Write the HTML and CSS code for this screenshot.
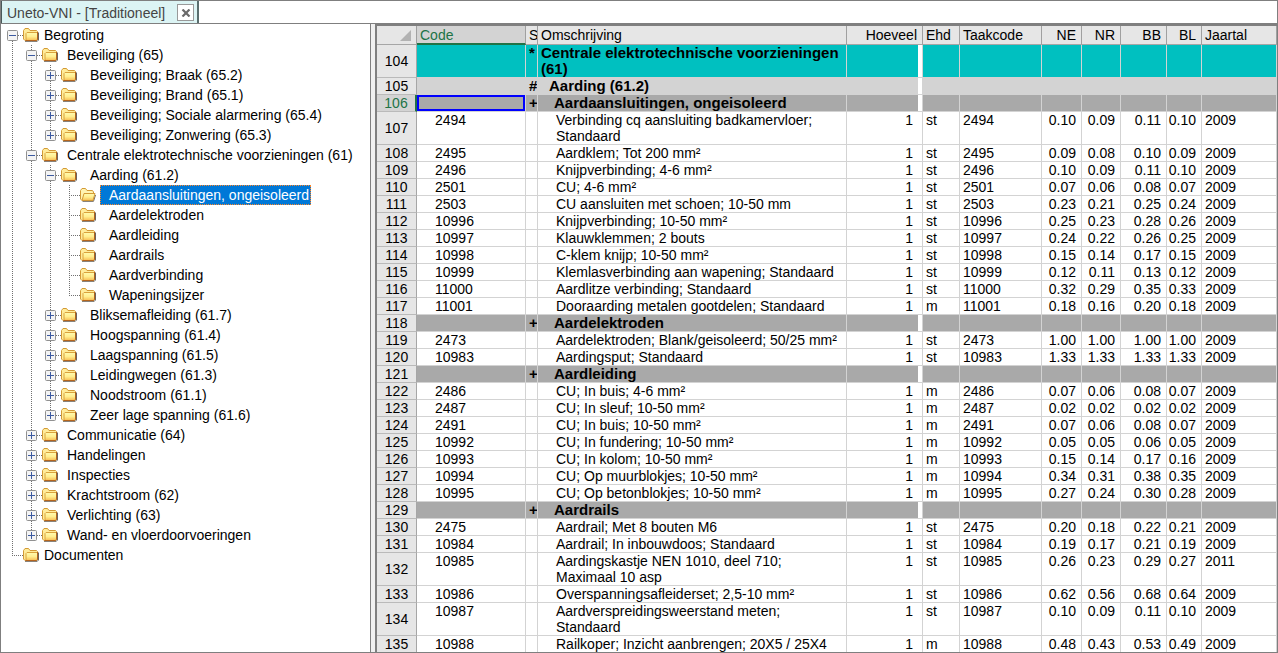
FILE: index.html
```html
<!DOCTYPE html>
<html lang="nl">
<head>
<meta charset="utf-8">
<title>Uneto-VNI - [Traditioneel]</title>
<link rel="stylesheet" href="styles.css">
</head>
<body>
<svg class="defs" width="0" height="0" aria-hidden="true">
  <linearGradient id="gold" x1="0" y1="0" x2="0" y2="1"><stop offset="0" stop-color="#fffbb0"/><stop offset=".5" stop-color="#ffee90"/><stop offset="1" stop-color="#f7bd52"/></linearGradient>
</svg>
<div class="window">
  <header class="tabbar">
    <div class="tab">
      <span class="tab-title">Uneto-VNI - [Traditioneel]</span>
      <button class="tab-close" type="button" aria-label="Sluiten">
        <svg viewBox="0 0 10 8" width="10" height="8"><path d="M1.500 0.500L8.500 7.500M8.500 0.500L1.500 7.500" stroke="#6a6a6a" stroke-width="2.200" fill="none"/></svg>
      </button>
    </div>
  </header>
  <main class="panes">
    <nav class="tree-pane" aria-label="Begroting"><ul class="tree" id="tree"></ul></nav>
    <section class="grid-pane">
      <table class="grid">
        <colgroup>
          <col class="w-row"><col class="w-code"><col class="w-s"><col class="w-oms"><col class="w-hoev"><col class="w-ehd"><col class="w-taak"><col class="w-ne"><col class="w-nr"><col class="w-bb"><col class="w-bl"><col class="w-jaar">
        </colgroup>
        <thead>
          <tr>
            <th class="corner"><svg viewBox="0 0 11 11" width="11" height="11"><path d="M11 0V11H0Z" fill="#b2b2b2"/></svg></th>
            <th class="active">Code</th><th class="s">S</th><th>Omschrijving</th><th class="num">Hoeveel</th><th>Ehd</th><th>Taakcode</th><th class="num">NE</th><th class="num">NR</th><th class="num">BB</th><th class="num">BL</th><th>Jaartal</th>
          </tr>
        </thead>
        <tbody id="rows"></tbody>
      </table>
    </section>
  </main>
</div>
<script src="app.js"></script>
</body>
</html>
```
FILE: styles.css
```css
* { box-sizing: border-box; }
body {
  margin: 0;
  font-family: "Liberation Sans", Arial, sans-serif;
  font-size: 14px;
  line-height: 16px;
  color: #000;
  background: #fff;
}
.defs { display: none; }
.defs { display: block; position: absolute; }
.window {
  display: flex;
  flex-direction: column;
  height: 100vh;
  border: 1px solid #7f7f7f;
  overflow: hidden;
}
.tabbar { display: flex; height: 23px; border-bottom: 1px solid #7f7f7f; flex: none; }
.tab {
  display: flex;
  align-items: center;
  gap: 12px;
  padding: 1px 3px 0 5px;
  background: #dcf4f4;
  border-left: 1px solid #4a5a5a;
  border-right: 2px solid #5a6e6e;
  color: #444;
}
.tab-title { white-space: nowrap; }
.tab-close {
  display: flex;
  align-items: center;
  justify-content: center;
  width: 17px;
  height: 17px;
  padding: 0;
  border: 1px solid #999;
  background: #fff;
}
.panes { display: flex; flex: 1; min-height: 0; background: #f0f0f0; }
.tree-pane {
  flex: none;
  width: 370px;
  background: #fff;
  border-right: 1px solid #7f7f7f;
  overflow: hidden;
}
.grid-pane {
  flex: 1;
  min-width: 0;
  margin-left: 4px;
  border-top: 2px solid #7f7f7f;
  border-left: 2px solid #7f7f7f;
  background: #fff;
  overflow: hidden;
}

.tree, .tree ul { list-style: none; margin: 0; padding: 0; }
.tree { padding: 1px 0 0 6px; }
.tree ul { margin-left: 19px; }
.node { position: relative; }
.node::before {
  content: "";
  position: absolute;
  left: 5px;
  top: 0;
  bottom: 0;
  width: 1px;
  background: repeating-linear-gradient(to bottom, #707070 0 1px, transparent 1px 2px);
}
.node:last-child::before { bottom: auto; height: 11px; }
.tree > .node:first-child::before { top: 10px; }
.line { position: relative; display: flex; align-items: center; height: 20px; }
.stub {
  flex: none;
  display: flex;
  align-items: center;
  width: 16px;
  height: 20px;
  background: repeating-linear-gradient(to right, #707070 0 1px, transparent 1px 2px) 5px 10px / 11px 1px no-repeat;
}
.toggle {
  display: block;
  width: 11px;
  height: 11px;
  margin-top: 1px;
  padding: 0;
  border: 0;
  background: none;
}
.toggle svg, .folder { display: block; }
.folder { flex: none; }
.label { flex: none; padding: 1px 2px 1px 4px; margin-left: 1px; line-height: 18px; white-space: nowrap; }
.level1 > .line .label { margin-left: 5px; }
.level2 > .line .label, .level3 > .line .label { padding-left: 9px; margin-left: 4px; }
.label.selected { background: #0078d7; color: #fff; outline: 1px dotted #ff8728; outline-offset: -1px; }

.grid { border-collapse: separate; border-spacing: 0; table-layout: fixed; width: 100%; }
.w-row { width: 40px; }
.w-code { width: 109px; }
.w-s { width: 12px; }
.w-oms { width: 309px; }
.w-hoev { width: 76px; }
.w-ehd { width: 37px; }
.w-taak { width: 82px; }
.w-ne { width: 40px; }
.w-nr { width: 39px; }
.w-bb { width: 46px; }
.w-bl { width: 35px; }
.grid th, .grid td {
  padding: 0 3px;
  border-right: 1px solid #d3d3d3;
  border-bottom: 1px solid #d3d3d3;
  text-align: left;
  vertical-align: top;
  font-weight: normal;
  white-space: nowrap;
}
.grid .num { padding: 0 5px 0 0; text-align: right; }
.grid .s { padding: 0 0 0 3px; overflow: hidden; }
.grid thead th {
  height: 19px;
  padding-top: 1px;
  background: #e6e6e6;
  border-right-color: #a0a0a0;
  border-bottom-color: #a6a6a6;
}
.grid thead .s, .grid thead .num { padding-top: 1px; }
.grid thead th.active { background: #d3d3d3; color: #217346; border-bottom: 2px solid #217346; }
.grid thead .corner { padding: 4px 5px 0 0; }
.corner svg { display: block; margin-left: auto; }
.grid tbody th {
  background: #e6e6e6;
  border-right-color: #a6a6a6;
  border-bottom-color: #bababa;
  text-align: center;
  vertical-align: middle;
}
.grid tbody th.current { background: #d3d3d3; color: #217346; border-right: 2px solid #217346; }
.grid .code { padding-left: 18px; }
.grid .desc { padding-left: 18px; }
.grid .hoev { padding-right: 9px; }
.grid .group td { font-size: 15px; font-weight: bold; }
.g1 td { background: #00c0c0; }
.g2 td { background: #d3d3d3; }
.g3 td { background: #a9a9a9; }
.group td.hoev {
  background-image: linear-gradient(#fff, #fff);
  background-size: 4px 100%;
  background-position: right;
  background-repeat: no-repeat;
}
.grid .g1 .desc { padding-left: 3px; }
.grid .g2 .desc { padding-left: 11px; }
.grid .g3 .desc { padding-left: 16px; }
.grid td.cursor { box-shadow: inset 0 0 0 2px #00f; }
```
FILE: app.js
```js
const tree = [
  ["Begroting", "-", [
    ["Beveiliging (65)", "-", [
      ["Beveiliging; Braak (65.2)", "+"],
      ["Beveiliging; Brand (65.1)", "+"],
      ["Beveiliging; Sociale alarmering (65.4)", "+"],
      ["Beveiliging; Zonwering (65.3)", "+"]
    ]],
    ["Centrale elektrotechnische voorzieningen (61)", "-", [
      ["Aarding (61.2)", "-", [
        ["Aardaansluitingen, ongeisoleerd", "open"],
        ["Aardelektroden"], ["Aardleiding"], ["Aardrails"], ["Aardverbinding"], ["Wapeningsijzer"]
      ]],
      ["Bliksemafleiding (61.7)", "+"],
      ["Hoogspanning (61.4)", "+"],
      ["Laagspanning (61.5)", "+"],
      ["Leidingwegen (61.3)", "+"],
      ["Noodstroom (61.1)", "+"],
      ["Zeer lage spanning (61.6)", "+"]
    ]],
    ["Communicatie (64)", "+"],
    ["Handelingen", "+"],
    ["Inspecties", "+"],
    ["Krachtstroom (62)", "+"],
    ["Verlichting (63)", "+"],
    ["Wand- en vloerdoorvoeringen", "+"]
  ]],
  ["Documenten"]
];

const box = sign => `<button class="toggle" type="button" aria-label="${sign === "+" ? "Uitvouwen" : "Invouwen"}"><svg viewBox="0 0 11 11" width="11" height="11"><rect x=".5" y=".5" width="10" height="10" rx="1" fill="#f4f4f4" stroke="#919191"/><path d="M2 5.500H9${sign === "+" ? "M5.500 2V9" : ""}" stroke="#3c5aa0" fill="none"/></svg></button>`;

const folder = `<svg class="folder" viewBox="0 0 16 14" width="16" height="14"><path d="M2 13.300H14.300L15.500 12V4.500" fill="none" stroke="#6b655c"/><path d="M.5 11V2.500L2 .5H5.500L7 2.500H13.500L14.500 3.500V11L13.500 12.500H2Z" fill="#ffec9a" stroke="#d39a35"/><path d="M3 12V5.500L4 4.500H14.500V11L13.500 12.500H3Z" fill="url(#gold)" stroke="#d9a23c"/><path d="M14.500 4V11.500L13.500 12.500H2.500" fill="none" stroke="#b5651d"/></svg>`;
const openFolder = `<svg class="folder" viewBox="0 0 16 14" width="16" height="14"><path d="M2.500 13.300H13.500L15.500 7" fill="none" stroke="#6b655c"/><path d="M.5 11V2.500L2 .5H5.500L7 2.500H12.500L13.500 4V11L12 12.500H2Z" fill="#fff3b0" stroke="#d39a35"/><path d="M2 12.500L4 5.500H15L13 12.500Z" fill="url(#gold)" stroke="#d39a35"/></svg>`;

const node = ([label, kind, kids], level) => `<li class="node level${level}"><div class="line"><span class="stub">${kind === "+" || kind === "-" ? box(kind) : ""}</span>${kind === "open" ? openFolder : folder}<span class="label${kind === "open" ? " selected" : ""}">${label}</span></div>${kids ? `<ul>${kids.map(k => node(k, level + 1)).join("")}</ul>` : ""}</li>`;

document.getElementById("tree").innerHTML = tree.map(n => node(n, 0)).join("");

const rows = `g1|*|Centrale elektrotechnische voorzieningen/n(61)
g2|#|Aarding (61.2)
g3|+|Aardaansluitingen, ongeisoleerd
2494|Verbinding cq aansluiting badkamervloer;/nStandaard|st|0.10|0.09|0.11|0.10
2495|Aardklem; Tot 200 mm²|st|0.09|0.08|0.10|0.09
2496|Knijpverbinding; 4-6 mm²|st|0.10|0.09|0.11|0.10
2501|CU; 4-6 mm²|st|0.07|0.06|0.08|0.07
2503|CU aansluiten met schoen; 10-50 mm|st|0.23|0.21|0.25|0.24
10996|Knijpverbinding; 10-50 mm²|st|0.25|0.23|0.28|0.26
10997|Klauwklemmen; 2 bouts|st|0.24|0.22|0.26|0.25
10998|C-klem knijp; 10-50 mm²|st|0.15|0.14|0.17|0.15
10999|Klemlasverbinding aan wapening; Standaard|st|0.12|0.11|0.13|0.12
11000|Aardlitze verbinding; Standaard|st|0.32|0.29|0.35|0.33
11001|Dooraarding metalen gootdelen; Standaard|m|0.18|0.16|0.20|0.18
g3|+|Aardelektroden
2473|Aardelektroden; Blank/geisoleerd; 50/25 mm²|st|1.00|1.00|1.00|1.00
10983|Aardingsput; Standaard|st|1.33|1.33|1.33|1.33
g3|+|Aardleiding
2486|CU; In buis; 4-6 mm²|m|0.07|0.06|0.08|0.07
2487|CU; In sleuf; 10-50 mm²|m|0.02|0.02|0.02|0.02
2491|CU; In buis; 10-50 mm²|m|0.07|0.06|0.08|0.07
10992|CU; In fundering; 10-50 mm²|m|0.05|0.05|0.06|0.05
10993|CU; In kolom; 10-50 mm²|m|0.15|0.14|0.17|0.16
10994|CU; Op muurblokjes; 10-50 mm²|m|0.34|0.31|0.38|0.35
10995|CU; Op betonblokjes; 10-50 mm²|m|0.27|0.24|0.30|0.28
g3|+|Aardrails
2475|Aardrail; Met 8 bouten M6|st|0.20|0.18|0.22|0.21
10984|Aardrail; In inbouwdoos; Standaard|st|0.19|0.17|0.21|0.19
10985|Aardingskastje NEN 1010, deel 710;/nMaximaal 10 asp|st|0.26|0.23|0.29|0.27|2011
10986|Overspanningsafleiderset; 2,5-10 mm²|st|0.62|0.56|0.68|0.64
10987|Aardverspreidingsweerstand meten;/nStandaard|st|0.10|0.09|0.11|0.10
10988|Railkoper; Inzicht aanbrengen; 20X5 / 25X4|m|0.48|0.43|0.53|0.49`;

document.getElementById("rows").innerHTML = rows.split("\n").map((line, i) => {
  const f = line.replace("/n", "<br>").split("|");
  const n = 104 + i;
  const head = `<th scope="row"${n === 106 ? ' class="current"' : ""}>${n}</th>`;
  if (f[0][0] === "g") {
    return `<tr class="group ${f[0]}">${head}<td${n === 106 ? ' class="cursor"' : ""}></td><td class="s">${f[1]}</td><td class="desc">${f[2]}</td><td class="hoev"></td>${"<td></td>".repeat(7)}</tr>`;
  }
  const [code, desc, unit, ne, nr, bb, bl, year = "2009"] = f;
  return `<tr>${head}<td class="code">${code}</td><td class="s"></td><td class="desc">${desc}</td><td class="num hoev">1</td><td>${unit}</td><td>${code}</td>${[ne, nr, bb, bl].map(v => `<td class="num">${v}</td>`).join("")}<td>${year}</td></tr>`;
}).join("");
```
